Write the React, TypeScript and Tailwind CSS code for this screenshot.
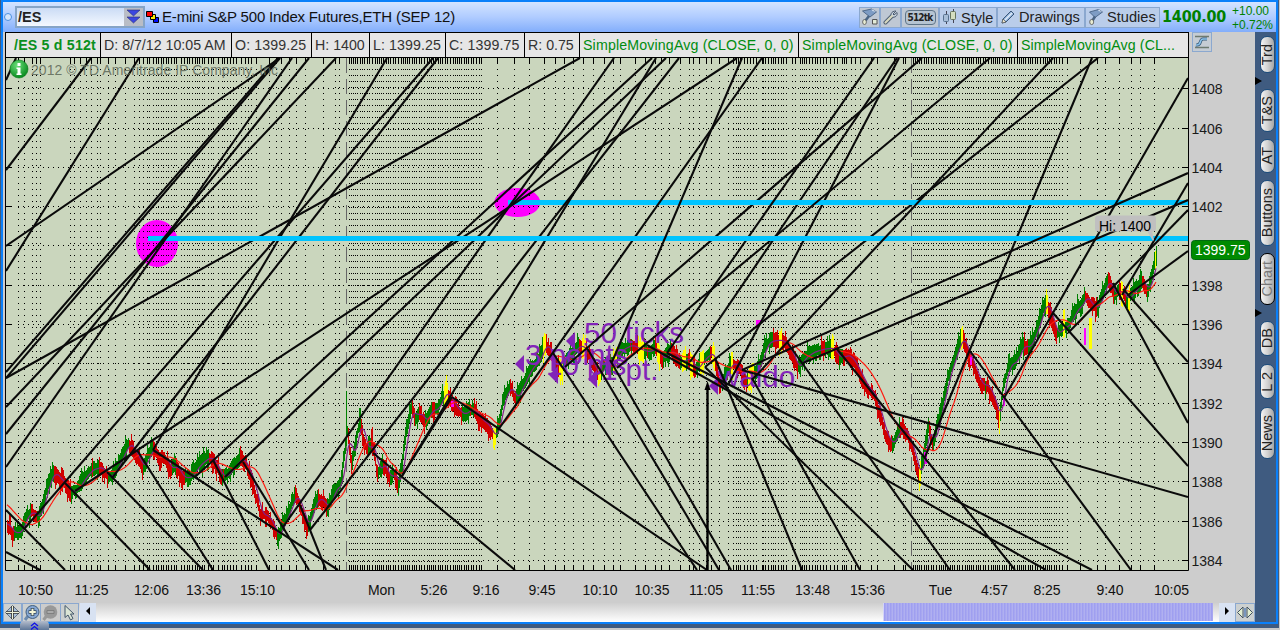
import type { ReactNode } from 'react'

type Segment = [number, number, number, number]

const PLOT = { left: 6, right: 1188, top: 58, bottom: 570 }

const priceLabels = [
  { label: '1408', y: 88 },
  { label: '1406', y: 128 },
  { label: '1404', y: 167 },
  { label: '1402', y: 206 },
  { label: '', y: 245 },
  { label: '1398', y: 285 },
  { label: '1396', y: 324 },
  { label: '1394', y: 363 },
  { label: '1392', y: 403 },
  { label: '1390', y: 442 },
  { label: '1388', y: 481 },
  { label: '1386', y: 521 },
  { label: '1384', y: 560 },
]

const timeLabels: [string, number][] = [
  ['10:50', 35.5], ['11:25', 91.5], ['12:06', 151.5], ['13:36', 203.5], ['15:10', 257.5],
  ['Mon', 381.5], ['5:26', 434], ['9:16', 486], ['9:45', 542], ['10:10', 600],
  ['10:35', 652], ['11:05', 706], ['11:55', 758], ['13:48', 812.5], ['15:36', 867.5],
  ['Tue', 940.5], ['4:57', 994.5], ['8:25', 1047], ['9:40', 1110], ['10:05', 1171.5],
]

// overnight sessions are packed almost solid with ticks
function denseTicks(from: number, to: number) {
  const steps = [2, 2, 2, 2, 3, 2, 2, 3, 2, 3, 3]
  const out: number[] = []
  let i = 0
  for (let x = from; x <= to; x += steps[i++ % steps.length]) out.push(x)
  return out
}

const tickColumns = [
  18, 24, 32, 36, 40, 70, 74, 80, 86, 91, 97, 100, 108, 115, 125, 134, 139, 143, 147, 149, 153, 156, 158,
  161, 163, 166, 168, 171, 174, 176, 181, 184, 187, 189, 192, 195, 197, 199, 202, 204, 208, 211, 213, 218,
  222, 224, 227, 230, 233, 236, 241, 245, 248, 251, 256, 269, 276, 281, 289, 296, 305, 323, 335, 339,
  ...denseTicks(349, 481),
  497, 514, 529, 544, 555, 564, 573, 583, 593, 604, 613, 620, 635, 645, 655, 661, 669, 680, 689, 693, 699,
  706, 711, 719, 728, 733, 736, 738, 740, 744, 747, 750, 753, 756, 762, 763, 765, 768, 771, 773, 775, 778,
  781, 783, 786, 792, 795, 800, 802, 804, 806, 809, 812, 815, 817, 820, 823, 826, 830, 834, 837, 842, 844,
  846, 851, 855, 860, 871, 877, 894, 903, 905,
  ...denseTicks(913, 1056),
  1059, 1062, 1067, 1080, 1097, 1105, 1119, 1131, 1140, 1154,
]

// [x, y] anchors of the futures price through the three sessions
const pricePath: [number, number][] = [
  [7, 524], [12, 533], [20, 532], [26, 515], [32, 512], [38, 518], [42, 505], [48, 482], [53, 472], [60, 480],
  [65, 485], [70, 492], [76, 490], [82, 480], [90, 470], [100, 467], [108, 478], [115, 470], [122, 455],
  [128, 443], [132, 448], [138, 460], [143, 468], [148, 455], [152, 448], [158, 457], [164, 457], [170, 470],
  [175, 465], [182, 478], [190, 477], [198, 465], [208, 457], [214, 462], [220, 475], [225, 477], [232, 468],
  [240, 458], [246, 465], [253, 485], [260, 515], [266, 515], [272, 525], [277, 538], [282, 525], [288, 512],
  [295, 494], [300, 506], [307, 528], [312, 508], [318, 497], [322, 502], [328, 508], [333, 490], [340, 485],
  [344, 455], [347, 430], [351, 460], [356, 438], [360, 420], [363, 438], [367, 452], [371, 442], [374, 455],
  [377, 474], [381, 463], [385, 468], [389, 480], [393, 472], [398, 486], [402, 462], [406, 430], [411, 408],
  [415, 418], [419, 411], [424, 423], [430, 410], [436, 410], [441, 399], [446, 391], [450, 400], [457, 410],
  [463, 415], [468, 410], [474, 410], [480, 420], [487, 425],
  [494, 438], [498, 425], [503, 398], [510, 386], [515, 400], [522, 385], [530, 368], [538, 361], [544, 344],
  [549, 350], [555, 362], [560, 370], [568, 358], [578, 345], [586, 350], [592, 365], [598, 376], [604, 365],
  [612, 365], [620, 350], [630, 345], [640, 350], [648, 352], [655, 347], [662, 360], [670, 350], [680, 362],
  [688, 358], [695, 370], [702, 360], [711, 352], [715, 365], [720, 386], [725, 375], [731, 362], [740, 370],
  [746, 381], [752, 375], [758, 368], [765, 345], [770, 341], [780, 340], [786, 345], [791, 353], [797, 369],
  [803, 358], [812, 352], [822, 349], [832, 348], [838, 358], [848, 355], [855, 365], [865, 385], [875, 398],
  [885, 435], [892, 445], [898, 430], [905, 430], [912, 450], [919, 478], [924, 450], [928, 425], [932, 445],
  [938, 420], [948, 375], [958, 345], [962, 337], [968, 355], [973, 365], [980, 385], [987, 385], [995, 405],
  [999, 420], [1003, 385], [1008, 365], [1015, 362], [1022, 345], [1028, 348], [1036, 330], [1042, 310],
  [1046, 302], [1050, 315], [1056, 335], [1062, 328], [1068, 325], [1075, 310], [1081, 305], [1085, 295],
  [1090, 305], [1097, 308], [1103, 290], [1108, 279], [1113, 295], [1120, 290], [1126, 300], [1132, 293],
  [1138, 285], [1143, 281], [1147, 293], [1152, 272], [1156, 257],
]

const yellowRanges = [
  [444, 447], [493, 495], [543, 545], [559, 562], [582, 585], [598, 600], [613, 616], [638, 643], [657, 659],
  [682, 685], [690, 692], [700, 703], [712, 714], [731, 732], [748, 753], [779, 781], [831, 833], [919, 920],
  [961, 962], [999, 999], [1046, 1047], [1063, 1064], [1121, 1122], [1128, 1129], [1155, 1155],
]

const closes: number[] = []
for (let x = 7; x <= 1156; x++) {
  const next = pricePath.findIndex(([px]) => px >= x)
  const [bx, by] = pricePath[next]
  const [ax, ay] = pricePath[Math.max(0, next - 1)]
  closes.push(bx === ax ? by : ay + ((by - ay) * (x - ax)) / (bx - ax))
}

const bars = closes.map((y, i) => {
  const pair = i >> 1
  const body = Math.abs(Math.sin(pair * 12.9898) * 43758.5453) % 1
  const tail = Math.abs(Math.sin(pair * 78.233) * 12543.123) % 1
  const wick = Math.abs(Math.sin(i * 39.425) * 9631.77) % 1
  const slope = closes[Math.min(closes.length - 1, i + 2)] - closes[Math.max(0, i - 2)]
  const jitter = Math.sin(pair * 1.1) * 1.8
  const x = i + 7
  const up = slope + jitter < 0
  const yellow = yellowRanges.some(([a, b]) => x >= a && x <= b)
  const extra = yellow ? 4 : 0
  return {
    x,
    top: Math.round(y - 4 - body * 5 - (wick > 0.82 ? 5 : 0) - extra),
    bottom: Math.round(y + 4 + tail * 6 + (wick < 0.18 ? 5 : 0) + extra),
    color: yellow ? '#ffff00' : up ? '#008000' : '#d00000',
  }
})

// before the first close the averages run at `seed`
function average(span: number, seed: number) {
  return closes
    .map((_, i) => {
      const part = closes.slice(Math.max(0, i - span + 1), i + 1)
      const sum = part.reduce((a, b) => a + b, 0) + (span - part.length) * seed
      return `${i + 7},${(sum / span).toFixed(1)}`
    })
    .join(' ')
}

const fastAverage = average(7, 524)
const slowAverage = average(26, 504)

const backLines: Segment[] = [
  [6, 80, 16, 58], [6, 170, 91, 58], [6, 271, 139, 58], [6, 246, 280, 58], [6, 372, 278, 58], [6, 378, 280, 58],
  [6, 378, 580, 58], [25, 528, 433, 58], [112, 478, 438, 58], [153, 450, 387, 58],
  [565, 367, 922, 58], [690, 362, 897, 58], [705, 367, 1098, 58], [728, 385, 899, 58], [925, 457, 1092, 58],
  [6, 510, 65, 570], [6, 552, 40, 570], [65, 483, 150, 570], [107, 472, 203, 570], [137, 450, 213, 570],
  [153, 450, 338, 570], [213, 460, 269, 570], [243, 462, 309, 570], [300, 505, 326, 570], [373, 453, 515, 570],
  [452, 397, 707, 570], [553, 353, 697, 570], [587, 348, 719, 570], [610, 360, 731, 570], [647, 345, 1046, 570],
  [667, 353, 1092, 570], [705, 367, 913, 570], [715, 358, 802, 570], [752, 378, 860, 570], [742, 370, 1188, 497],
  [787, 342, 950, 570], [837, 349, 1015, 570], [970, 351, 1131, 570], [1053, 313, 1188, 466],
  [1113, 283, 1188, 423], [1123, 289, 1188, 362], [402, 476, 452, 397],
]

const middleLines: Segment[] = [
  [75, 491, 737, 58], [195, 477, 652, 58], [225, 477, 666, 58], [283, 527, 614, 58], [310, 530, 679, 58],
  [402, 476, 656, 58], [498, 430, 762, 58], [617, 368, 990, 58], [667, 353, 874, 58],
]

const frontLines: Segment[] = [
  [6, 407, 336, 58], [6, 434, 309, 58], [6, 467, 292, 58], [612, 362, 742, 58], [752, 380, 1053, 58],
  [742, 370, 1188, 173], [803, 363, 1188, 200], [1004, 398, 1188, 78], [1068, 333, 1188, 210],
  [1122, 295, 1188, 183], [1128, 295, 1188, 251],
]

const notes = [
  { text: '3 points', x: 525, y: 365, markX: 515, markY: 364 },
  { text: '50 ticks', x: 584, y: 343, markX: 566, markY: 341 },
  { text: '10 pts', x: 546, y: 375, markX: 549, markY: 375 },
  { text: '1 pt.', x: 601, y: 380, markX: 588, markY: 379 },
  { text: 'waldo', x: 718, y: 387, markX: 709, markY: 386 },
]

function TrendLines({ lines }: { lines: Segment[] }) {
  return (
    <g stroke="#0a0a0a" strokeWidth="2.1">
      {lines.map(([x1, y1, x2, y2], i) => (
        <line key={i} x1={x1} y1={y1} x2={x2} y2={y2} />
      ))}
    </g>
  )
}

function Chart() {
  return (
    <svg
      className="block h-[545px] w-[1252px] font-['Liberation_Sans',sans-serif] text-[14px]"
      viewBox="3 58 1252 545"
    >
      <defs>
        <clipPath id="plot">
          <rect x="6" y="58" width="1182" height="512" />
        </clipPath>
        <radialGradient id="info" cx="0.4" cy="0.3" r="0.7">
          <stop offset="0" stopColor="#6be07a" />
          <stop offset="1" stopColor="#07891d" />
        </radialGradient>
      </defs>

      <rect x={PLOT.left} y={PLOT.top} width="1182" height="512" fill="#cad6bd" />

      <g clipPath="url(#plot)">
        <ellipse cx="157" cy="243.5" rx="21" ry="23.5" fill="#ff00ff" />
        <ellipse cx="517.3" cy="202.5" rx="23" ry="14.5" fill="#ff00ff" />

        <g stroke="#000" shapeRendering="crispEdges">
          {tickColumns.map((x) => (
            <g key={x}>
              <line x1={x + 0.5} x2={x + 0.5} y1="63" y2="569" strokeDasharray="1 5" />
              <line x1={x + 0.5} x2={x + 0.5} y1="58" y2="64" />
              <line x1={x + 0.5} x2={x + 0.5} y1="565" y2="570" />
            </g>
          ))}
          {priceLabels.map(({ y }) => (
            <g key={y}>
              <line x1="18" x2="1188" y1={y + 0.5} y2={y + 0.5} strokeDasharray="1 4" />
              <line x1="6" x2="12" y1={y + 0.5} y2={y + 0.5} />
              <line x1="1182" x2="1188" y1={y + 0.5} y2={y + 0.5} />
            </g>
          ))}
          <line x1="346.5" x2="346.5" y1="58" y2="570" stroke="#666" strokeDasharray="15 6" />
          <line x1="911.5" x2="911.5" y1="58" y2="570" stroke="#666" strokeDasharray="15 6" />
        </g>

        <g shapeRendering="crispEdges">
          {bars.map((bar) => (
            <rect key={bar.x} x={bar.x} y={bar.top} width="1" height={bar.bottom - bar.top} fill={bar.color} />
          ))}
          <rect x="346" y="391" width="1" height="40" fill="#008000" />
          <rect x="359" y="408" width="2" height="20" fill="#008000" />
          <rect x="372" y="427" width="1" height="25" fill="#d00000" />
          <rect x="1089" y="318" width="3" height="31" fill="#ffff00" />
          <rect x="1084" y="328" width="2" height="17" fill="#ff00ff" />
          <rect x="1156" y="246" width="1" height="20" fill="#008000" />
          <rect x="924" y="452" width="3" height="12" fill="#ff00ff" />
          <rect x="1003" y="397" width="2" height="9" fill="#ff00ff" />
          <rect x="970" y="355" width="2" height="10" fill="#ff00ff" />
          <rect x="451" y="401" width="3" height="6" fill="#ff00ff" />
        </g>
        <polyline points={fastAverage} fill="none" stroke="#80208a" strokeWidth="1.2" />
        <polyline points={slowAverage} fill="none" stroke="#ff1a10" strokeWidth="1.2" />

        <g fill="#8224b8" fontSize="29.5">
          {notes.map((note) => (
            <g key={note.text}>
              <path d={`M${note.markX} ${note.markY}l9 -9v18z`} />
              <text x={note.x} y={note.y}>
                {note.text}
              </text>
            </g>
          ))}
        </g>
        <path d="M756 320h5v3l-2 1v3l-3 1z" fill="#ff00ff" />

        <TrendLines lines={backLines} />
        <rect x="508" y="200" width="680" height="5" fill="#00c4ff" />
        <TrendLines lines={middleLines} />
        <rect x="148" y="236" width="1040" height="5" fill="#00c4ff" />
        <TrendLines lines={frontLines} />
        <path d="M707.5 570V388" stroke="#000" strokeWidth="2.4" />
        <path d="M707.5 381l3 9h-6z" />
      </g>

      <path d="M1147 231l6 10 1-1-2-9z" fill="#c0c0c0" />
      <rect x="1095" y="215.5" width="61" height="16" rx="3" fill="#c0c0c0" />
      <text x="1099" y="231" fontSize="14">
        Hi: 1400
      </text>

      <path d="M5.5 58V570.5H1188.5V58" fill="none" stroke="#000" />

      <circle cx="19" cy="69" r="9" fill="url(#info)" stroke="#087a1a" strokeWidth="0.6" />
      <path d="M17.5 63h3v3h-3zM16.5 67.5h4v6h1v1.5h-5v-1.5h1v-4.500h-1z" fill="#fff" />
      <text x="31" y="75" fill="#5c6656" fillOpacity="0.85" textLength="247">
        2012 © TD Ameritrade IP Company, Inc
      </text>

      {priceLabels.map(({ label, y }) => (
        <g key={y}>
          <path d={`M1183 ${y + 0.5}h5`} stroke="#000" />
          <text x="1191.5" y={y + 5.5} fill="#1a1a1a">
            {label}
          </text>
        </g>
      ))}
      <rect x="1191.5" y="240.5" width="58" height="19" rx="3" fill="#008a00" stroke="#006a10" />
      <text x="1195" y="255" fill="#fff">
        1399.75
      </text>

      {timeLabels.map(([label, x]) => (
        <text key={label} x={x} y="595" textAnchor="middle" fill="#111">
          {label}
        </text>
      ))}
    </svg>
  )
}

function ToolButton({ className, children }: { className: string; children: ReactNode }) {
  return (
    <button
      type="button"
      className={`flex h-[21px] shrink-0 items-center border border-[#8ba8cf] ${className}`}
    >
      {children}
    </button>
  )
}

function Header() {
  return (
    <header className="flex h-[30px] items-center bg-linear-to-b from-[#d4e4ff] via-[#b0ccff] to-[#83aefb]">
      <span className="ml-px h-2 w-2 rounded-full border-[1.5px] border-[#4a90e0] bg-[#d6e6fb]" />
      <div className="ml-[3px] flex h-[22px] w-[130px] border-2 border-[#86a4c6] bg-linear-to-b from-[#cbdcf5] to-[#f4f8ff]">
        <span className="flex-1 pl-px text-[14.5px] leading-[19px] font-bold text-[#222]">/ES</span>
        <svg className="h-[18px] w-[19px] bg-[#b9bdc6]" viewBox="0 0 19 18">
          <path d="M3 2h13l-6.500 6zM3 9h13l-6.500 6z" fill="#3c46e0" stroke="#2b3070" strokeWidth="0.6" />
        </svg>
      </div>
      <svg className="ml-px h-[14px] w-[14px]" viewBox="0 0 14 14" stroke="#000">
        <path d="M7.500 7.500h5v5h-5z" fill="#0010ff" />
        <path d="M4.500 4.500h5v5h-5z" fill="#ffee00" />
        <path d="M.5 1.500h6v5h-6z" fill="#ff0000" />
      </svg>
      <h1 className="ml-[2px] w-[697px] pt-px text-[15px] tracking-[-0.18px] whitespace-nowrap text-[#111]">
        E-mini S&amp;P 500 Index Futures,ETH (SEP 12)
      </h1>

      <ToolButton className="w-[21px] justify-center bg-[#bfc8d4]">
        <svg className="h-[18px] w-[18px]" viewBox="0 0 18 18">
          <path d="M1.500 3l9-2 5 3L9 9z" fill="#7e9cc4" stroke="#3d5878" strokeWidth="0.8" />
          <path d="M10.500 1l5 3-4-1z" fill="#dfe9f5" />
          <path d="M8 8l-3.500 4.500" stroke="#4a6585" strokeWidth="2.600" />
          <ellipse cx="3.500" cy="14" rx="1.900" ry="2.500" fill="#e8ecd2" stroke="#555" strokeWidth="0.8" />
          <path d="M11.500 11.500h4.500v4.500h-4.500z" fill="#e4ecd8" stroke="#555" />
        </svg>
      </ToolButton>
      <ToolButton className="w-[21px] justify-center bg-[#bfc8d4]">
        <svg className="h-4 w-4" viewBox="0 0 16 16" fill="none">
          <path d="M2.500 13.500L9 7" stroke="#4c5c70" strokeWidth="4" strokeLinecap="round" />
          <path d="M13 2l-3 3 1 1 3-2.500c1 3-2 5.500-5 4.500-2-2-1-6 4-6z" fill="#c8d3de" stroke="#4c5c70" />
          <path d="M2.500 13.500L9 7" stroke="#d7d8c0" strokeWidth="2.200" strokeLinecap="round" />
        </svg>
      </ToolButton>
      <ToolButton className="w-[38px] justify-center bg-[#bfc8d4]">
        <span className="flex h-[15px] w-[31px] shrink-0 items-center justify-center rounded-[4px] border border-[#5e7488] bg-[#b6c4d2] font-['DejaVu_Sans_Condensed','DejaVu_Sans',sans-serif] text-[10px] font-bold tracking-[-0.8px] text-[#222]">
          512tk
        </span>
      </ToolButton>
      <ToolButton className="w-[58px] bg-[#bacdea] pl-[2px]">
        <svg className="h-[18px] w-4 shrink-0" viewBox="0 0 16 18">
          <path d="M4.500 3v13M11.500 1v14" stroke="#445" />
          <rect x="1.500" y="6.500" width="5" height="7" rx="1" fill="#a8bed8" stroke="#56718f" />
          <rect x="8.500" y="3.500" width="5" height="8" rx="1" fill="#d5dfc0" stroke="#66755c" />
        </svg>
        <span className="ml-[3px] pt-px text-[14.5px] leading-[18px] text-[#222]">Style</span>
      </ToolButton>
      <ToolButton className="w-[88px] bg-[#bacdea] pl-[2px]">
        <svg className="h-4 w-4 shrink-0" viewBox="0 0 16 16">
          <path d="M2 14l1-4 8-8 3 3-8 8z" fill="#8fb1da" stroke="#3d5878" />
          <path d="M5 11l7-7" stroke="#e4eefa" strokeWidth="1.500" />
          <path d="M2 14l1-4 3 3z" fill="#f1ead0" stroke="#444" strokeWidth="0.6" />
        </svg>
        <span className="ml-[3px] text-[14.600px] leading-[18px] text-[#222]">Drawings</span>
      </ToolButton>
      <ToolButton className="w-[75px] bg-[#bacdea] pl-[2px]">
        <svg className="h-[18px] w-[17px] shrink-0" viewBox="0 0 17 18">
          <path d="M1.500 4l9-2.500L14.500 4 7 9.500z" fill="#7e9cc4" stroke="#3d5878" strokeWidth="0.8" />
          <path d="M10.500 1.500l4 2.500-4-1z" fill="#dfe9f5" />
          <path d="M7 8.500l-2.500 4" stroke="#4a6585" strokeWidth="2.600" />
          <ellipse cx="3.700" cy="14" rx="2" ry="2.600" fill="#e8ecd2" stroke="#555" strokeWidth="0.8" />
        </svg>
        <span className="ml-[2px] text-[14.600px] leading-[18px] text-[#222]">Studies</span>
      </ToolButton>
      <span className="ml-[2px] w-[66px] font-['DejaVu_Sans_Condensed','DejaVu_Sans',sans-serif] text-[16px] font-bold tracking-[-0.2px] text-[#008000]">
        1400.00
      </span>
      <div className="ml-[4px] pt-[2px] text-[12px] leading-[14px] whitespace-nowrap text-[#008000]">
        <p>+10.00</p>
        <p>+0.72%</p>
      </div>
    </header>
  )
}

function Cell({ className, children }: { className: string; children: ReactNode }) {
  return (
    <span
      className={`h-full shrink-0 overflow-hidden border-r border-black pl-[3px] text-[14.2px] leading-[24px] whitespace-nowrap ${className}`}
    >
      {children}
    </span>
  )
}

function QuoteRow() {
  return (
    <div className="flex h-[26px]">
      <div className="ml-[2px] flex w-[1184px] border-y border-l border-black bg-[#e6e6e6] text-[#333]">
        <Cell className="w-[95px] pl-[8px] font-bold tracking-[0.2px] text-[#0a9020]">/ES 5 d 512t</Cell>
        <Cell className="w-[131px]">D: 8/7/12 10:05 AM</Cell>
        <Cell className="w-[80px] tracking-[0.1px]">O: 1399.25</Cell>
        <Cell className="w-[58px]">H: 1400</Cell>
        <Cell className="w-[76px] tracking-[0.1px]">L: 1399.25</Cell>
        <Cell className="w-[79px] tracking-[0.1px]">C: 1399.75</Cell>
        <Cell className="w-[55px]">R: 0.75</Cell>
        <Cell className="w-[219px] tracking-[0.15px] text-[#008c10]">SimpleMovingAvg (CLOSE, 0, 0)</Cell>
        <Cell className="w-[219px] tracking-[0.15px] text-[#008c10]">SimpleMovingAvg (CLOSE, 0, 0)</Cell>
        <Cell className="w-[171px] tracking-[0.1px] text-[#008c10]">SimpleMovingAvg (CL...</Cell>
      </div>
      <svg className="ml-[3px] h-5 w-5 border border-[#8ba8cf] bg-[#c5ccd4]" viewBox="0 0 18 18" fill="none">
        <path d="M2 3.500h14M2 14.500h14" stroke="#6d7a70" strokeWidth="1.600" />
        <path d="M3 12c6 1 3-6 7-6h4" stroke="#345878" strokeWidth="3" />
        <path d="M3 12c6 1 3-6 7-6h4" stroke="#8cc4ec" strokeWidth="1.500" />
      </svg>
    </div>
  )
}

function SideTab({ className, children }: { className: string; children: ReactNode }) {
  return (
    <button
      type="button"
      className={`ml-[5px] flex w-[15px] shrink-0 items-center justify-center rounded-[7px] border bg-linear-to-r from-[#f4f4f4] via-[#d2d2d2] to-[#a6a6a6] text-[14.5px] ${className}`}
    >
      <span className="rotate-180 leading-[15px] whitespace-nowrap [writing-mode:vertical-rl]">{children}</span>
    </button>
  )
}

function Marker({ className }: { className: string }) {
  return (
    <svg className={`h-2 w-[7px] shrink-0 ${className}`} viewBox="0 0 7 8">
      <path d="M0 0l7 4-7 4z" />
    </svg>
  )
}

function Sidebar() {
  return (
    <aside className="flex w-[21px] shrink-0 flex-col bg-[#3f5b80] pt-[4px] text-[#222]">
      <SideTab className="h-[37px] border-[#1d4d7c]">Trd</SideTab>
      <Marker className="mt-[4px]" />
      <SideTab className="mt-[4px] h-[43px] border-[#1d4d7c]">T&amp;S</SideTab>
      <SideTab className="mt-[7px] h-[34px] border-[#1d4d7c]">AT</SideTab>
      <SideTab className="mt-[7px] h-[66px] border-[#1d4d7c]">Buttons</SideTab>
      <SideTab className="mt-[7px] h-[52px] border-black text-[#777]">Chart</SideTab>
      <Marker className="mt-[4px]" />
      <SideTab className="mt-[4px] h-[35px] border-[#1d4d7c]">DB</SideTab>
      <SideTab className="mt-[8px] h-[35px] border-[#1d4d7c]">L 2</SideTab>
      <SideTab className="mt-[8px] h-[52px] border-[#1d4d7c]">News</SideTab>
    </aside>
  )
}

function ScrollRow() {
  return (
    <div className="flex h-[19px] bg-linear-to-b from-[#cfcfcf] to-white">
      <svg className="h-[19px] w-[19px] border border-[#8ba8cf] bg-[#ccd0d0]" viewBox="0 0 17 17">
        <path d="M8.500 1.500l7 7-7 7-7-7z" fill="#a9c0da" stroke="#4c5c6c" strokeWidth="0.8" />
        <path d="M8.500 2v13M2 8.500h13" stroke="#333" strokeWidth="2.600" />
        <path d="M8.500 2v13M2 8.500h13" stroke="#eef2d8" strokeWidth="1" />
      </svg>
      <svg className="h-[19px] w-[19px] border border-[#8ba8cf] bg-[#ccd0d0]" viewBox="0 0 17 17">
        <path d="M5 12l-3 4" stroke="#6b8bb0" strokeWidth="3" />
        <circle cx="9.500" cy="8" r="6.500" fill="#86a8d4" stroke="#43607e" />
        <path d="M9.500 4v8M5.500 8h8" stroke="#33465a" strokeWidth="3.600" />
        <path d="M9.500 4.700v6.600M6.200 8h6.600" stroke="#f6f8d8" strokeWidth="2" />
      </svg>
      <svg className="h-[19px] w-[19px] border-y border-[#8ba8cf] bg-[#ccc]" viewBox="0 0 18 17">
        <path d="M5 12l-3 4" stroke="#999" strokeWidth="3" />
        <circle cx="9" cy="8" r="6.800" fill="#999" />
        <path d="M5.500 6.500h7v3h-7z" fill="#aaa" stroke="#777" strokeWidth="0.8" />
      </svg>
      <svg className="h-[19px] w-[19px] border border-[#8ba8cf] bg-[#ccd0d0]" viewBox="0 0 17 17">
        <path d="M4 1.500v12l3-2.500 2.500 5 2.500-1.500-2.500-4.500H13z" fill="#dbe5d5" stroke="#43566a" />
      </svg>
      <span className="ml-px flex w-4 items-start justify-center bg-[#d8e2f2] pt-[4px]">
        <svg className="h-2 w-1" viewBox="0 0 4 8">
          <path d="M4 0L0 4l4 4z" />
        </svg>
      </span>
      <div className="flex-1" />
      <div className="h-[18px] w-[330px] border-l border-[#d4d4f8] bg-[repeating-linear-gradient(90deg,#9f9ff0_0px,#9f9ff0_1px,#b0b0f0_2px,#b0b0f0_3px)]" />
      <span className="ml-[6px] flex w-4 items-start justify-center bg-[#d8e2f2] pt-[4px]">
        <svg className="h-2 w-1" viewBox="0 0 4 8">
          <path d="M0 0l4 4-4 4z" />
        </svg>
      </span>
      <svg className="h-[19px] w-5 border border-[#8ba8cf] bg-[#ccd0d0]" viewBox="0 0 18 17">
        <path d="M7 3v11L1.500 8.500zM11 3v11l5.500-5.500z" fill="#e1eccf" stroke="#405060" />
        <path d="M9 4v9" stroke="#7896bd" strokeWidth="2" />
      </svg>
    </div>
  )
}

export default function App() {
  return (
    <div className="relative h-[630px] w-[1280px] overflow-hidden bg-[#c8c8c8] font-['Liberation_Sans',sans-serif]">
      <div className="h-[628px] w-[1279px] bg-[#3f5b80] pl-px">
        <div className="h-[624px] w-[1277px] border-2 border-[#0a80fa]">
          <Header />
          <div className="flex h-[590px]">
            <main className="w-[1252px] bg-[#cdcdcd]">
              <QuoteRow />
              <Chart />
              <ScrollRow />
            </main>
            <Sidebar />
          </div>
        </div>
      </div>
      <div className="absolute top-[621px] left-5 flex h-[9px] w-[29px] justify-center rounded-t-[4px] bg-linear-to-b from-[#b4bccb] to-[#5f7798]">
        <svg className="h-[9px] w-[9px]" viewBox="0 0 9 9" fill="none" stroke="#1010e8" strokeWidth="1.300">
          <path d="M1 5l3.500-3L8 5M1 8.500l3.500-3 3.500 3" />
        </svg>
      </div>
    </div>
  )
}
